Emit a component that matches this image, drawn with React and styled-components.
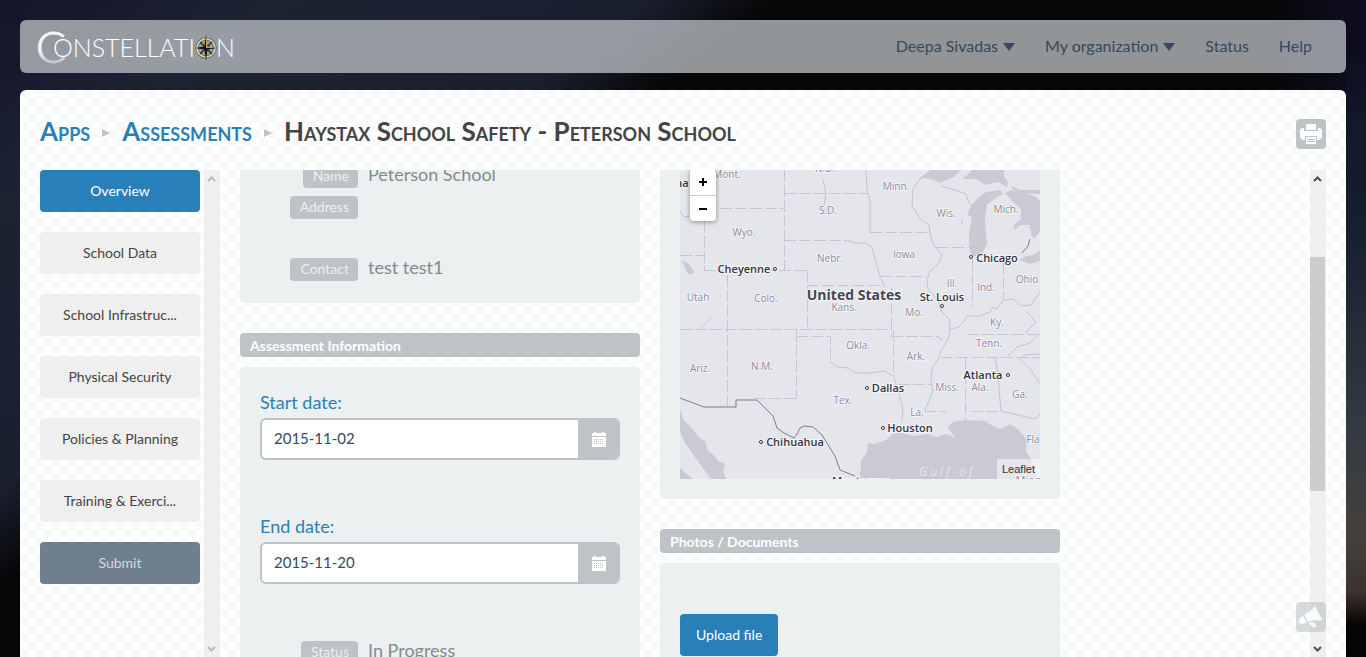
import React from "react";
import styled, { createGlobalStyle } from "styled-components";

const GlobalStyle = createGlobalStyle`
  *, *::before, *::after { box-sizing: border-box; }
  body {
    margin: 0;
    font-family: Lato, "Liberation Sans", sans-serif;
    color: #444;
    background:
      linear-gradient(to bottom, transparent 8%, #10182a 18%, #17202d 36%, #333b45 66%, #45403a 82%, #3d322e 90%, #060505 95%) 100% 0 / 20px 100vh no-repeat,
      linear-gradient(to right, transparent 92%, #0f0e20 100%) 0 0 / 100% 100px no-repeat,
      linear-gradient(143deg, #14142a 0%, #1c2432 12%, #1a1f2e 29%, #060606 35%, #050505 100%) 0 0 / 100% 100vh no-repeat;
    background-color: #050505;
  }
  button, input { font-family: inherit; }
`;

const Page = styled.div`
  height: 100vh;
  min-height: 400px;
  padding: 20px 20px 0;
  display: flex;
  flex-direction: column;
  gap: 17px;
  overflow: hidden;
`;

const TopBar = styled.header`
  flex: none;
  height: 53px;
  padding: 0 34px 0 16px;
  display: flex;
  align-items: center;
  justify-content: space-between;
  border-radius: 6px;
  background: rgba(189, 195, 199, 0.76);
`;

const HomeLink = styled.a`
  display: flex;
`;

const Nav = styled.nav`
  display: flex;
  gap: 30px;
  padding-bottom: 2px;
`;

const NavLink = styled.a`
  color: #34495e;
  font-size: 16px;
  line-height: 24px;
  text-decoration: none;
`;

const NavMenu = styled.button`
  display: flex;
  align-items: center;
  gap: 5px;
  padding: 0;
  border: 0;
  background: none;
  color: #34495e;
  font-size: 16px;
  line-height: 24px;
`;

const Caret = styled.span`
  margin-top: 3px;
  border: 6px solid transparent;
  border-top: 8px solid #34495e;
  border-bottom: 0;
`;

const Panel = styled.main`
  flex: 1;
  min-height: 0;
  padding: 0 20px;
  display: flex;
  flex-direction: column;
  border-radius: 6px 6px 0 0;
  background: repeating-conic-gradient(#fff 0 25%, #f9fbfb 0 50%) 0 0 / 16px 16px;
`;

const TitleRow = styled.div`
  flex: none;
  height: 80px;
  display: flex;
  align-items: center;
  justify-content: space-between;
  padding-top: 8px;
`;

const Crumbs = styled.h1`
  margin: 0 0 6px;
  display: flex;
  align-items: center;
  gap: 12px;
  font-size: 26px;
  line-height: 32px;
  font-weight: 700;
  font-variant: small-caps;
  color: #444;
`;

const CrumbLink = styled.a`
  color: #2980b9;
  text-decoration: none;
`;

const CrumbArrow = styled.span`
  margin: 4px 0 0;
  border: 4px solid transparent;
  border-left: 8px solid #bdc3c7;
  border-right: 0;
`;

const ToolButton = styled.button`
  width: 30px;
  height: 30px;
  padding: 0;
  display: flex;
  align-items: center;
  justify-content: center;
  border: 0;
  border-radius: 4px;
  background: #bdc3c7;
`;

const FeedbackButton = styled(ToolButton)`
  position: fixed;
  right: 40px;
  bottom: 25px;
  opacity: 0.6;
`;

const Body = styled.div`
  flex: 1;
  min-height: 0;
  display: flex;
`;

const Steps = styled.nav`
  width: 160px;
  flex: none;
  display: flex;
  flex-direction: column;
  gap: 20px;
  overflow: hidden;
`;

const stepTones = {
  active: { bg: "#2980b9", fg: "#fff" },
  plain: { bg: "#efefef", fg: "#444" },
  submit: { bg: "#6f7f8e", fg: "#d5dade" },
};

const StepButton = styled.button`
  flex: none;
  height: 42px;
  padding: 0 20px;
  border: 0;
  border-radius: 4px;
  font-size: 14px;
  line-height: 20px;
  background: ${(p) => stepTones[p.$tone].bg};
  color: ${(p) => stepTones[p.$tone].fg};
`;

const Track = styled.div`
  flex: none;
  width: 16px;
  margin-left: ${(p) => p.$gap || 0}px;
  padding: 6px 1px 5px 0;
  display: flex;
  flex-direction: column;
  align-items: center;
  background: #f0f0f0;
`;

const Rail = styled.div`
  flex: 1;
  width: 15px;
  margin: 5px 0 7px;
  display: flex;
  flex-direction: column;
`;

const RailSpace = styled.div`
  flex: ${(p) => p.$share};
`;

const Thumb = styled.div`
  flex: ${(p) => p.$share};
  background: #cdcdcd;
`;

const Pane = styled.section`
  flex: 1;
  min-width: 0;
  margin-left: 20px;
  overflow: hidden;
`;

const Columns = styled.div`
  margin-top: -31px;
  display: grid;
  grid-template-columns: repeat(2, minmax(0, 400px));
  gap: 20px;
  align-items: start;
`;

const Column = styled.div`
  display: flex;
  flex-direction: column;
  gap: 30px;
`;

const Section = styled.section`
  display: flex;
  flex-direction: column;
  gap: 10px;
`;

const SectionTitle = styled.h2`
  margin: 0;
  padding: 1px 10px 0;
  border-radius: 4px;
  background: #bdc3c7;
  color: #fff;
  font-size: 14px;
  line-height: 23px;
  font-weight: 700;
`;

const Card = styled.div`
  padding: ${(p) => p.$top || 20}px 20px ${(p) => p.$bottom || 20}px;
  border-radius: 4px;
  background: #ecf0f1;
`;

const Facts = styled.dl`
  margin: 0;
  padding-top: 2px;
`;

const Fact = styled.div`
  height: ${(p) => p.$lines * 31}px;
  display: grid;
  grid-template-columns: 98px 1fr;
  grid-template-rows: 31px;
  column-gap: 10px;
  align-items: center;
`;

const FactName = styled.dt`
  justify-self: end;
  height: 23px;
  padding: 0 9px 0 10px;
  border-radius: 4px;
  background: #bdc3c7;
  color: #ecf0f1;
  font-size: 14px;
  line-height: 22px;
`;

const FactValue = styled.dd`
  margin: 0;
  padding-bottom: 6px;
  color: #7f8c8d;
  font-size: 18px;
  line-height: 24px;
`;

const Field = styled.div`
  margin-bottom: 51px;
`;

const FieldLabel = styled.label`
  display: block;
  color: #2980b9;
  font-size: 18px;
  line-height: 31px;
`;

const FieldGroup = styled.div`
  height: 42px;
  display: flex;
  border: 2px solid #bdc3c7;
  border-radius: 6px;
  background: #fff;
  overflow: hidden;
`;

const DateInput = styled.input`
  flex: 1;
  min-width: 0;
  padding: 0 12px 2px;
  border: 0;
  outline: 0;
  background: transparent;
  color: #34495e;
  font-size: 15px;
`;

const DateButton = styled.button`
  width: 40px;
  padding: 0 0 0 2px;
  display: flex;
  align-items: center;
  justify-content: center;
  border: 0;
  background: #bdc3c7;
`;

const UploadButton = styled.button`
  display: block;
  height: 42px;
  padding: 0 16px 2px;
  border: 0;
  border-radius: 4px;
  background: #2980b9;
  color: #fff;
  font-size: 14px;
`;

const MapFrame = styled.div`
  position: relative;
  height: 320px;
  overflow: hidden;
  background: #e5e6eb;

  > svg { display: block; width: 100%; height: 100%; }
`;

const ZoomControl = styled.div`
  position: absolute;
  top: 10px;
  left: 10px;
  width: 26px;
  display: flex;
  flex-direction: column;
  border-radius: 4px;
  background: #fff;
  box-shadow: 0 1px 5px rgba(0, 0, 0, 0.4);
`;

const ZoomButton = styled.button`
  height: 26px;
  padding: 0;
  display: flex;
  align-items: center;
  justify-content: center;
  border: 0;
  background: none;

  & + & { border-top: 1px solid #ccc; }
`;

const Attribution = styled.a`
  position: absolute;
  right: 0;
  bottom: 0;
  padding: 0 5px;
  background: rgba(255, 255, 255, 0.5);
  color: #333;
  font: 11px/20px "Liberation Sans", sans-serif;
  text-decoration: none;
`;

const StateText = styled.text`
  font: 10px "Open Sans", "Noto Sans", sans-serif;
  fill: #8b8b9c;
  stroke: #f3f3f7;
  stroke-width: 2px;
  paint-order: stroke;
  text-anchor: middle;
`;

const CityText = styled.text`
  font: ${(p) => (p.$country ? "700 14px" : "600 11px")} "Open Sans", "Noto Sans", sans-serif;
  fill: ${(p) => (p.$country ? "#454553" : "#33333f")};
  stroke: #f6f6f9;
  stroke-width: 2px;
  paint-order: stroke;
  text-anchor: middle;
`;

const SeaText = styled.text`
  font: italic 12px "Open Sans", "Noto Sans", sans-serif;
  letter-spacing: 3px;
  fill: #e3e3ec;
`;

const LogoText = styled.text`
  font-family: Lato, sans-serif;
  font-weight: 300;
  font-size: ${(p) => p.$size}px;
`;

function Logo() {
  return (
    <svg width="200" height="40" viewBox="0 0 200 40" role="img" aria-label="Constellation">
      <defs>
        <linearGradient id="crescent" x1="0" y1="0" x2="0" y2="1">
          <stop offset="0.6" stopColor="#f3f5f6" />
          <stop offset="0.85" stopColor="#b9bdc2" />
        </linearGradient>
      </defs>
      <LogoText $size={44} x="0" y="36" fill="url(#crescent)" stroke="url(#crescent)">C</LogoText>
      <LogoText $size={25} x="17" y="30" fill="#fff">ONSTELLATI</LogoText>
      <LogoText $size={25} x="180" y="30" fill="#fff">N</LogoText>
      <g transform="translate(170 21)">
        <circle r="9" fill="none" stroke="#4a4536" strokeWidth="3" />
        <circle r="9" fill="none" stroke="#e2d5a4" strokeWidth="2" />
        <path d="M-6-6L6 6M6-6L-6 6" stroke="#2b2a26" strokeWidth="1.500" />
        <path d="M0-13L1.500-1.500L11 0L1.500 1.500L0 13L-1.500 1.500L-11 0L-1.500-1.500Z" fill="#15150f" />
        <path d="M0-13L1.500-1.500L11 0L0 0Z" fill="#c2a63e" />
      </g>
    </svg>
  );
}

function PrinterIcon() {
  return (
    <svg width="22" height="22" viewBox="0 0 22 22" fill="#fff">
      <path d="M6 1h10v6H6z" />
      <path d="M2 5h2v3h14V5h2q2 1 2 3v6q0 2-3 3h-2v-4H5v4H3q-3-1-3-3V8q0-2 2-3z" />
      <path d="M6 14h10v7H6z" />
      <path d="M7 16.500h8M7 18.500h8" stroke="#bdc3c7" />
    </svg>
  );
}

function MegaphoneIcon() {
  return (
    <svg width="24" height="24" viewBox="0 0 24 24" fill="#fff">
      <path d="M16 1l7.500 14.500-9-.3-6 1.300-3-7C9 8 13 5 16 1z" />
      <path d="M4 11q-4 1.500-4 5t3.500 3l4-1.500z" />
      <path d="M9.500 18l3.500-.8q4 1 4 3.300t-3 1.800z" />
    </svg>
  );
}

function CalendarIcon() {
  return (
    <svg width="14" height="16" viewBox="0 0 14 16" fill="#fff">
      <path d="M0 2h2V1h2v1h6V1h2v1h2v3H0zM0 6h14v10H0z" />
      <path
        d="M2 8.500h10M2 10.500h10M2 12.500h10"
        stroke="#bdc3c7"
        strokeDasharray="1 1"
      />
    </svg>
  );
}

function Chevron({ up, faint }) {
  return (
    <svg width="9" height="6" viewBox="0 0 9 6" fill="none" stroke={faint ? "#bababa" : "#505050"} strokeWidth="2">
      <path d={up ? "M1 5L4.500 1.500L8 5" : "M1 1L4.500 4.500L8 1"} />
    </svg>
  );
}

const states = [
  ["Mont.", 47, 19], ["N.D.", 145, 13], ["S.D.", 148, 55], ["Wyo.", 64, 77], ["Nebr.", 150, 103],
  ["Minn.", 216, 31], ["Wis.", 266, 58], ["Mich.", 326, 54], ["Iowa", 224, 99], ["Ill.", 272, 128],
  ["Ind.", 306, 132], ["Ohio", 347, 124], ["Utah", 18, 142], ["Colo.", 86, 143], ["Kans.", 164, 152],
  ["Mo.", 234, 157], ["Ky.", 317, 167], ["Tenn.", 309, 188], ["Okla.", 178, 190], ["Ark.", 236, 201],
  ["Ariz.", 20, 213], ["N.M.", 82, 211], ["Miss.", 267, 232], ["Ala.", 300, 232], ["Ga.", 340, 239],
  ["Tex.", 163, 245], ["La.", 237, 257], ["Fla", 353, 284],
];

const cities = [
  { name: "Cheyenne", x: 64, y: 114, dot: [95, 110] },
  { name: "Chicago", x: 317, y: 103, dot: [291, 98] },
  { name: "St. Louis", x: 262, y: 142, dot: [262, 147] },
  { name: "Atlanta", x: 303, y: 220, dot: [328, 216] },
  { name: "Dallas", x: 208, y: 233, dot: [187, 229] },
  { name: "Houston", x: 230, y: 273, dot: [203, 269] },
  { name: "Chihuahua", x: 115, y: 287, dot: [81, 283] },
  { name: "Monterrey", x: 180, y: 326 },
  { name: "Miami", x: 352, y: 325 },
];

function MapView() {
  return (
    <MapFrame>
      <svg viewBox="0 0 360 320" preserveAspectRatio="xMidYMid slice">
        <g fill="#cacad5">
          <path d="M238 21L250 11H281L274 18L264 22L260 24L252 20L244 19Z" />
          <path d="M283 20L292 11H324V18L328 23L327 28L318 23L305 26L297 20Z" />
          <path d="M287 56L292 45L299 38L306 33L320 31L323 35L314 40L307 46L305 60L306 75L307 85L302 95L292 98L289 88L289 72L292 58Z" />
          <path d="M325 34L331 31L345 34L356 38L360 42V72L354 80L351 76L350 66L340 66L335 71L333 67L341 60L341 50L335 45Z" />
          <path d="M331 27L340 31L360 31V35L342 34L333 31Z" />
          <path d="M339 101L346 97L354 96L360 91V102L350 105Z" />
          <path d="M281 68L283 62L281 61Z" />
          <path d="M2 101L9 105L14 113L11 116L6 112Z" />
          <path d="M0 250L4 262L7 264L12 270L20 279L25 282L28 292L33 295L38 302L45 305L43 312L46 320H31L22 308L12 294L4 282L0 272Z" />
          <path d="M0 309L13 320H0Z" />
          <path d="M180 320L181 302L187 293L188 284L194 285L206 281L212 275L222 274L234 277L248 275L256 278L266 275L276 279L267 268L273 263L286 261L305 262L313 267L320 270L330 265L338 270L347 281L346 292L351 300L354 312L360 320Z" />
        </g>
        <g fill="none" stroke="#c6c6cf" strokeWidth="1" strokeDasharray="12 3" shapeRendering="crispEdges">
          <path d="M25 49H104M24 62V111M24 111H127M0 96H24M104 11V111M104 34H188M104 81H167" />
          <path d="M47 116V247M127 111V171M127 126H201M0 170H211M116 171V239M116 177H150V203M74 239H116" />
          <path d="M190 73H250M257 88H298M200 117H246M211 129V177M292 100V148M323 103V141" />
          <path d="M287 175H360M211 177H258M213 171V218M218 225H251M245 252H266M285 198V262M261 198H360M291 252H320" />
        </g>
        <g fill="none" stroke="#c3c3cc" strokeWidth="1">
          <path d="M0 52L4 58L10 57L15 56M167 81L175 84L185 84L192 88L200 118L205 128M143 21L146 35L143 52L150 48" />
          <path d="M186 11L187 30L190 42V73M240 20L233 30L232 47L240 60L249 66L250 75L253 85L262 96L258 105L250 112L247 121L248 130L258 142L262 153L269 160L270 170L279 168L283 164L287 157L300 157L310 153L313 148L317 150L323 141L333 140L342 147L351 146L360 133" />
          <path d="M262 27L275 31L286 35L289 44L293 48L300 40M306 44L298 62L298 88M270 170L268 180L262 190L258 200L252 210L251 222L253 232L248 244L245 252M258 177L262 182" />
          <path d="M150 203L158 208L168 209L176 214L190 214L205 212L214 218L219 235L223 250L222 262M315 198L318 215L319 230L321 252L355 260L360 255" />
          <path d="M346 152L356 163L345 174M328 197L337 188L350 184L360 174M360 195L345 196L340 200L350 210L360 224M20 170L26 164L32 158" />
        </g>
        <path
          d="M0 239L24 248H56V241H77L93 257L97 269L104 274L114 279L117 275L120 269L124 267L133 268L142 276L155 297L160 311L175 317"
          fill="none" stroke="#7d7d87"
        />
        <path d="M350 80L348 87L342 94" fill="none" stroke="#7d7d87" />
        {states.map(([name, x, y]) => (
          <StateText key={name} x={x} y={y}>{name}</StateText>
        ))}
        <CityText x="2" y="28">na</CityText>
        {cities.map((c) => (
          <g key={c.name}>
            <CityText x={c.x} y={c.y}>{c.name}</CityText>
            {c.dot && <circle cx={c.dot[0]} cy={c.dot[1]} r="1.500" fill="#fff" stroke="#33333f" />}
          </g>
        ))}
        <CityText $country x="174" y="141">United States</CityText>
        <SeaText x="239" y="317">Gulf of</SeaText>
      </svg>
      <ZoomControl>
        <ZoomButton aria-label="Zoom in">
          <svg width="8" height="8" viewBox="0 0 8 8"><path d="M0 4h8M4 0v8" stroke="#000" strokeWidth="2" /></svg>
        </ZoomButton>
        <ZoomButton aria-label="Zoom out">
          <svg width="8" height="8" viewBox="0 0 8 8"><path d="M0 4h8" stroke="#000" strokeWidth="2" /></svg>
        </ZoomButton>
      </ZoomControl>
      <Attribution href="#leaflet">Leaflet</Attribution>
    </MapFrame>
  );
}

function DateField({ id, label, value }) {
  return (
    <Field>
      <FieldLabel htmlFor={id}>{label}</FieldLabel>
      <FieldGroup>
        <DateInput id={id} type="text" defaultValue={value} />
        <DateButton aria-label="Open calendar"><CalendarIcon /></DateButton>
      </FieldGroup>
    </Field>
  );
}

function FactRow({ name, value, lines = 1 }) {
  return (
    <Fact $lines={lines}>
      <FactName>{name}</FactName>
      <FactValue>{value}</FactValue>
    </Fact>
  );
}

const steps = [
  ["Overview", "active"],
  ["School Data", "plain"],
  ["School Infrastruc...", "plain"],
  ["Physical Security", "plain"],
  ["Policies & Planning", "plain"],
  ["Training & Exerci...", "plain"],
  ["Submit", "submit"],
];

export default function App() {
  return (
    <>
      <GlobalStyle />
      <Page>
        <TopBar>
          <HomeLink href="#home"><Logo /></HomeLink>
          <Nav>
            <NavMenu>Deepa Sivadas<Caret /></NavMenu>
            <NavMenu>My organization<Caret /></NavMenu>
            <NavLink href="#status">Status</NavLink>
            <NavLink href="#help">Help</NavLink>
          </Nav>
        </TopBar>
        <Panel>
          <TitleRow>
            <Crumbs>
              <CrumbLink href="#apps">Apps</CrumbLink>
              <CrumbArrow />
              <CrumbLink href="#assessments">Assessments</CrumbLink>
              <CrumbArrow />
              <span>Haystax School Safety - Peterson School</span>
            </Crumbs>
            <ToolButton aria-label="Print"><PrinterIcon /></ToolButton>
          </TitleRow>
          <Body>
            <Steps>
              {steps.map(([name, tone]) => (
                <StepButton key={name} $tone={tone}>{name}</StepButton>
              ))}
            </Steps>
            <Track $gap={4}>
              <Chevron up faint />
              <Rail />
              <Chevron faint />
            </Track>
            <Pane>
              <Columns>
                <Column>
                  <Card $bottom={18}>
                    <Facts>
                      <FactRow name="Name" value="Peterson School" />
                      <FactRow name="Address" value="" lines={2} />
                      <FactRow name="Contact" value="test test1" />
                    </Facts>
                  </Card>
                  <Section>
                    <SectionTitle>Assessment Information</SectionTitle>
                    <Card>
                      <DateField id="start-date" label="Start date:" value="2015-11-02" />
                      <DateField id="end-date" label="End date:" value="2015-11-20" />
                      <Facts>
                        <FactRow name="Status" value="In Progress" />
                      </Facts>
                    </Card>
                  </Section>
                </Column>
                <Column>
                  <Card><MapView /></Card>
                  <Section>
                    <SectionTitle>Photos / Documents</SectionTitle>
                    <Card $top={51}>
                      <UploadButton>Upload file</UploadButton>
                    </Card>
                  </Section>
                </Column>
              </Columns>
            </Pane>
            <Track>
              <Chevron up />
              <Rail>
                <RailSpace $share={70} />
                <Thumb $share={235} />
                <RailSpace $share={148} />
              </Rail>
              <Chevron />
            </Track>
          </Body>
        </Panel>
      </Page>
      <FeedbackButton aria-label="Send feedback"><MegaphoneIcon /></FeedbackButton>
    </>
  );
}
